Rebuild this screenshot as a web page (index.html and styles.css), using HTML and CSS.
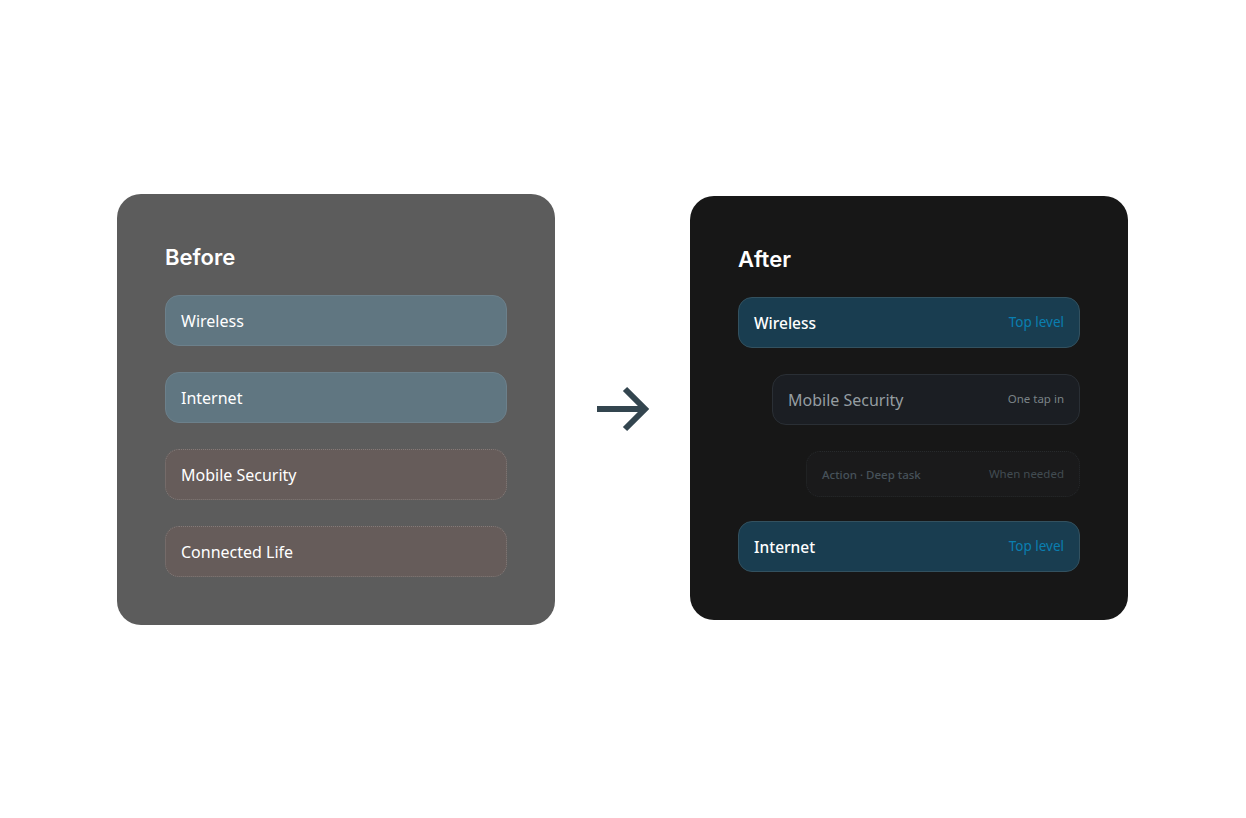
FILE: index.html
```html
<!DOCTYPE html>
<html lang="en">
<head>
<meta charset="utf-8">
<title>Before and After</title>
<link rel="stylesheet" href="styles.css">
</head>
<body>
<main class="compare">
  <section class="card card-before">
    <h2 class="title">Before</h2>
    <div class="rows">
      <div class="row row-blue"><span>Wireless</span></div>
      <div class="row row-blue"><span>Internet</span></div>
      <div class="row row-brown"><span>Mobile Security</span></div>
      <div class="row row-brown"><span>Connected Life</span></div>
    </div>
  </section>
  <svg class="arrow" width="55" height="48" viewBox="0 0 55 48" aria-hidden="true">
    <path d="M2 24H50M30 4L50 24L30 44" fill="none" stroke="#33454f" stroke-width="6"/>
  </svg>
  <section class="card card-after">
    <h2 class="title">After</h2>
    <div class="rows">
      <div class="row top"><span>Wireless</span><small>Top level</small></div>
      <div class="row mid"><span>Mobile Security</span><small>One tap in</small></div>
      <div class="row deep"><span>Action · Deep task</span><small>When needed</small></div>
      <div class="row top"><span>Internet</span><small>Top level</small></div>
    </div>
  </section>
</main>
</body>
</html>
```
FILE: styles.css
```css
* { box-sizing: border-box; }
html, body { margin: 0; height: 100%; background: #fff; }
body { font-family: "Noto Sans", sans-serif; }
.compare {
  height: 818px;
  display: flex;
  align-items: center;
  justify-content: center;
  gap: 40px;
  padding-right: 1px;
}
.card {
  width: 438px;
  border-radius: 24px;
  padding: 48px;
}
.card-before { background: #5c5c5c; height: 431px; margin-top: 1px; }
.card-after { background: #171717; height: 424px; margin-bottom: 2px; }
.title {
  margin: 0 0 23px;
  font: 600 22px/30px Inter, sans-serif;
  color: #fff;
}
.rows { display: flex; flex-direction: column; gap: 26px; }
.row {
  height: 51px;
  display: flex;
  align-items: center;
  justify-content: space-between;
  padding: 0 15px;
  border: 1px solid;
  border-radius: 14px;
  font-size: 16px;
  font-weight: 400;
  color: #fff;
}
.row-blue { background: #607681; border-color: #6c808b; }
.row-brown { background: #665c5a; border: 1px dotted #837b79; }
.row small { font-size: 11.5px; font-weight: 400; position: relative; top: -1px; }
.top { background: #193d50; border-color: #33515f; font-size: 15.5px; font-weight: 500; }
.top small { color: #0a7fb0; font-size: 13.5px; }
.mid { margin-left: 34px; background: #1b1e23; border-color: #2a2f35; color: #959da1; }
.mid small { color: #7a8387; }
.deep { margin-left: 68px; height: 46px; margin-bottom: -2px; background: #1a1a1b; border: 1px dotted #272a2c; color: #47525a; font-size: 11.5px; font-weight: 500; }
.deep small { color: #424c52; }
```
